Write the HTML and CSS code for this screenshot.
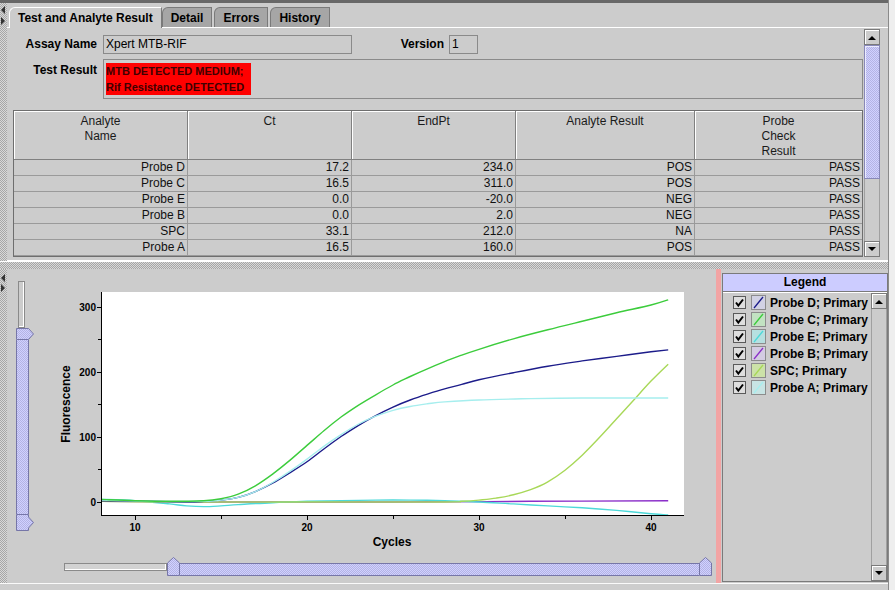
FILE: index.html
```html
<!DOCTYPE html>
<html lang="en">
<head>
<meta charset="utf-8">
<title>Test and Analyte Result</title>
<link rel="stylesheet" href="styles.css">
<script src="script.js" defer></script>
</head>
<body>
<svg class="defs" width="0" height="0" aria-hidden="true">
  <defs>
    <pattern id="bumps" width="2" height="2" patternUnits="userSpaceOnUse">
      <rect width="2" height="2" fill="#d0d0ff"/>
      <rect width="1" height="1" fill="#b4b4e4"/>
      <rect x="1" y="1" width="1" height="1" fill="#b4b4e4"/>
    </pattern>
  </defs>
</svg>
<div class="app">
  <div class="titlebar"></div>

  <div class="top-pane">
    <div class="gutter">
      <svg class="gutter-arrows" width="7" height="24" viewBox="0 0 7 24"><polygon points="5,3 1,7 5,11"/><polygon points="1,14 5,18 1,22"/></svg>
    </div>
    <div class="tabpane">
      <div class="tabs">
        <div class="tab active">Test and Analyte Result</div>
        <div class="tab">Detail</div>
        <div class="tab">Errors</div>
        <div class="tab">History</div>
      </div>
      <div class="tab-content">
        <div class="scroll-view">
          <div class="form-row assay-row">
            <span class="label assay-label">Assay Name</span>
            <span class="field assay-field">Xpert MTB-RIF</span>
            <span class="label version-label">Version</span>
            <span class="field version-field">1</span>
          </div>
          <div class="form-row result-row">
            <span class="label result-label">Test Result</span>
            <div class="result-box"><span class="result-text">MTB DETECTED MEDIUM;<br>Rif Resistance DETECTED</span></div>
          </div>
          <table class="grid">
            <colgroup><col class="c1"><col class="c2"><col class="c3"><col class="c4"><col class="c5"></colgroup>
            <thead>
              <tr><th>Analyte<br>Name</th><th>Ct</th><th>EndPt</th><th>Analyte Result</th><th>Probe<br>Check<br>Result</th></tr>
            </thead>
            <tbody>
              <tr><td>Probe D</td><td>17.2</td><td>234.0</td><td>POS</td><td>PASS</td></tr>
              <tr><td>Probe C</td><td>16.5</td><td>311.0</td><td>POS</td><td>PASS</td></tr>
              <tr><td>Probe E</td><td>0.0</td><td>-20.0</td><td>NEG</td><td>PASS</td></tr>
              <tr><td>Probe B</td><td>0.0</td><td>2.0</td><td>NEG</td><td>PASS</td></tr>
              <tr><td>SPC</td><td>33.1</td><td>212.0</td><td>NA</td><td>PASS</td></tr>
              <tr><td>Probe A</td><td>16.5</td><td>160.0</td><td>POS</td><td>PASS</td></tr>
            </tbody>
          </table>
        </div>
        <div class="vscroll">
          <div class="sbtn"><svg width="8" height="5" viewBox="0 0 8 5"><polygon points="0,5 4,1 8,5"/></svg></div>
          <div class="thumb top-thumb"></div>
          <div class="track"></div>
          <div class="sbtn"><svg width="8" height="5" viewBox="0 0 8 5"><polygon points="0,0 8,0 4,4"/></svg></div>
        </div>
      </div>
    </div>
  </div>

  <div class="hdivider"></div>

  <div class="bottom-pane">
    <div class="gutter">
      <svg class="gutter-arrows" width="7" height="24" viewBox="0 0 7 24"><polygon points="5,5 1,9 5,13"/><polygon points="1,15 5,19 1,23"/></svg>
    </div>
    <div class="chart-area">
      <div class="chart-row">
        <div class="vslider">
          <div class="vtrack"></div>
          <svg class="knob" width="18" height="12" viewBox="0 0 18 12"><polygon points="0.5,0.5 12.5,0.5 17.5,6 12.5,11.5 0.5,11.5" fill="url(#bumps)" stroke="#7676a8"/></svg>
          <div class="vbody"></div>
          <svg class="knob" width="18" height="17" viewBox="0 0 18 17"><polygon points="0.5,0.5 12.5,0.5 12.5,3 17.5,8.5 12.5,14 12.5,16.5 0.5,16.5" fill="url(#bumps)" stroke="#7676a8"/></svg>
        </div>
        <svg class="plot" width="672" height="271" viewBox="0 0 672 271">
          <defs><clipPath id="plotclip"><rect x="61" y="11" width="583" height="224"/></clipPath></defs>
          <rect x="61" y="11" width="583" height="223" fill="#ffffff"/>
          <g clip-path="url(#plotclip)" fill="none" stroke-width="1.4">
            <path data-series="b" stroke="#8b2fc9"/>
            <path data-series="e" stroke="#4dd9d9"/>
            <path data-series="spc" stroke="#a8d858"/>
            <path data-series="d" stroke="#1c1c8a"/>
            <path data-series="a" stroke="#a6eeee"/>
            <path data-series="c" stroke="#3ccc3c"/>
          </g>
          <g stroke="#000" stroke-width="1" fill="none">
            <line x1="61.5" y1="11" x2="61.5" y2="235"/>
            <line x1="61" y1="234.5" x2="644" y2="234.5"/>
            <line x1="57" y1="221.5" x2="61" y2="221.5"/>
            <line x1="58" y1="188.5" x2="61" y2="188.5"/>
            <line x1="57" y1="156.5" x2="61" y2="156.5"/>
            <line x1="58" y1="123.5" x2="61" y2="123.5"/>
            <line x1="57" y1="91.5" x2="61" y2="91.5"/>
            <line x1="58" y1="58.5" x2="61" y2="58.5"/>
            <line x1="57" y1="26.5" x2="61" y2="26.5"/>
            <line x1="95.5" y1="234" x2="95.5" y2="239"/>
            <line x1="181.5" y1="234" x2="181.5" y2="238"/>
            <line x1="267.5" y1="234" x2="267.5" y2="239"/>
            <line x1="353.5" y1="234" x2="353.5" y2="238"/>
            <line x1="439.5" y1="234" x2="439.5" y2="239"/>
            <line x1="525.5" y1="234" x2="525.5" y2="238"/>
            <line x1="611.5" y1="234" x2="611.5" y2="239"/>
          </g>
          <g class="tick-label">
            <text x="56" y="225" text-anchor="end">0</text>
            <text x="56" y="160" text-anchor="end">100</text>
            <text x="56" y="95" text-anchor="end">200</text>
            <text x="56" y="30" text-anchor="end">300</text>
            <text x="95" y="250" text-anchor="middle">10</text>
            <text x="267" y="250" text-anchor="middle">20</text>
            <text x="439" y="250" text-anchor="middle">30</text>
            <text x="611" y="250" text-anchor="middle">40</text>
          </g>
          <text class="axis-title" x="352" y="264.5" text-anchor="middle">Cycles</text>
          <text class="axis-title" transform="translate(29.5,123) rotate(-90)" text-anchor="middle">Fluorescence</text>
        </svg>
      </div>
      <div class="hslider">
        <div class="htrack"></div>
        <svg class="knob" width="13" height="19" viewBox="0 0 13 19"><polygon points="0.5,18.5 0.5,6 6.5,0.5 12.5,6 12.5,18.5" fill="url(#bumps)" stroke="#7676a8"/></svg>
        <div class="hbody"></div>
        <svg class="knob" width="13" height="19" viewBox="0 0 13 19"><polygon points="0.5,18.5 0.5,6 6.5,0.5 12.5,6 12.5,18.5" fill="url(#bumps)" stroke="#7676a8"/></svg>
      </div>
    </div>
    <div class="pink"></div>
    <div class="legend">
      <div class="legend-title">Legend</div>
      <div class="legend-body">
        <ul class="legend-list">
          <li class="legend-item">
            <svg class="check" width="13" height="13" viewBox="0 0 13 13"><rect x="0.5" y="0.5" width="12" height="12" fill="#dedede" stroke="#5a5a5a"/><path d="M3 6.5 L5.3 9.5 L10 3.5" fill="none" stroke="#000" stroke-width="2"/></svg>
            <svg class="swatch" width="15" height="15" viewBox="0 0 15 15"><rect x="0.5" y="0.5" width="14" height="14" fill="#d2d2e4" stroke="#8c8c8c"/><line x1="3" y1="13" x2="12" y2="2" stroke="#1c1c8a" stroke-width="1.3"/></svg>
            <span>Probe D; Primary</span>
          </li>
          <li class="legend-item">
            <svg class="check" width="13" height="13" viewBox="0 0 13 13"><rect x="0.5" y="0.5" width="12" height="12" fill="#dedede" stroke="#5a5a5a"/><path d="M3 6.5 L5.3 9.5 L10 3.5" fill="none" stroke="#000" stroke-width="2"/></svg>
            <svg class="swatch" width="15" height="15" viewBox="0 0 15 15"><rect x="0.5" y="0.5" width="14" height="14" fill="#c2e2c2" stroke="#8c8c8c"/><line x1="3" y1="13" x2="12" y2="2" stroke="#3ccc3c" stroke-width="1.3"/></svg>
            <span>Probe C; Primary</span>
          </li>
          <li class="legend-item">
            <svg class="check" width="13" height="13" viewBox="0 0 13 13"><rect x="0.5" y="0.5" width="12" height="12" fill="#dedede" stroke="#5a5a5a"/><path d="M3 6.5 L5.3 9.5 L10 3.5" fill="none" stroke="#000" stroke-width="2"/></svg>
            <svg class="swatch" width="15" height="15" viewBox="0 0 15 15"><rect x="0.5" y="0.5" width="14" height="14" fill="#b6e0e0" stroke="#8c8c8c"/><line x1="3" y1="13" x2="12" y2="2" stroke="#4dd9d9" stroke-width="1.3"/></svg>
            <span>Probe E; Primary</span>
          </li>
          <li class="legend-item">
            <svg class="check" width="13" height="13" viewBox="0 0 13 13"><rect x="0.5" y="0.5" width="12" height="12" fill="#dedede" stroke="#5a5a5a"/><path d="M3 6.5 L5.3 9.5 L10 3.5" fill="none" stroke="#000" stroke-width="2"/></svg>
            <svg class="swatch" width="15" height="15" viewBox="0 0 15 15"><rect x="0.5" y="0.5" width="14" height="14" fill="#d4cce2" stroke="#8c8c8c"/><line x1="3" y1="13" x2="12" y2="2" stroke="#8b2fc9" stroke-width="1.3"/></svg>
            <span>Probe B; Primary</span>
          </li>
          <li class="legend-item">
            <svg class="check" width="13" height="13" viewBox="0 0 13 13"><rect x="0.5" y="0.5" width="12" height="12" fill="#dedede" stroke="#5a5a5a"/><path d="M3 6.5 L5.3 9.5 L10 3.5" fill="none" stroke="#000" stroke-width="2"/></svg>
            <svg class="swatch" width="15" height="15" viewBox="0 0 15 15"><rect x="0.5" y="0.5" width="14" height="14" fill="#cce2a8" stroke="#8c8c8c"/><line x1="3" y1="13" x2="12" y2="2" stroke="#a8d858" stroke-width="1.3"/></svg>
            <span>SPC; Primary</span>
          </li>
          <li class="legend-item">
            <svg class="check" width="13" height="13" viewBox="0 0 13 13"><rect x="0.5" y="0.5" width="12" height="12" fill="#dedede" stroke="#5a5a5a"/><path d="M3 6.5 L5.3 9.5 L10 3.5" fill="none" stroke="#000" stroke-width="2"/></svg>
            <svg class="swatch" width="15" height="15" viewBox="0 0 15 15"><rect x="0.5" y="0.5" width="14" height="14" fill="#c8e4e4" stroke="#8c8c8c"/><line x1="3" y1="13" x2="12" y2="2" stroke="#a6eeee" stroke-width="1.3"/></svg>
            <span>Probe A; Primary</span>
          </li>
        </ul>
        <div class="lscroll">
          <div class="sbtn"><svg width="8" height="5" viewBox="0 0 8 5"><polygon points="0,5 4,1 8,5"/></svg></div>
          <div class="track"></div>
          <div class="sbtn"><svg width="8" height="5" viewBox="0 0 8 5"><polygon points="0,0 8,0 4,4"/></svg></div>
        </div>
      </div>
    </div>
  </div>

  <div class="footer"></div>
</div>
<div class="right-strip"></div>
</body>
</html>
```

FILE: styles.css
```css
* { box-sizing: border-box; }
html, body { margin: 0; padding: 0; }
body {
  width: 895px;
  height: 590px;
  overflow: hidden;
  display: flex;
  background: #cccccc;
  font-family: "Liberation Sans", Arial, sans-serif;
  font-size: 12px;
  color: #000;
}
.defs { display: block; width: 0; height: 0; flex: none; }

.app { width: 888px; flex: none; display: flex; flex-direction: column; }
.right-strip { width: 7px; flex: none; background: #eeeeee; border-left: 1px solid #8a8a8a; }

.titlebar { height: 3px; flex: none; background: #686868; }

.gutter {
  width: 7px;
  flex: none;
  background: repeating-conic-gradient(#a6a6a6 0 25%, #d8d8d8 0 50%) 0 0 / 2px 2px;
}
.gutter-arrows { display: block; fill: #333333; }

/* ---------- top pane ---------- */
.top-pane { height: 258px; flex: none; display: flex; }
.tabpane { flex: 1; min-width: 0; display: flex; flex-direction: column; }
.tabs { height: 24px; flex: none; display: flex; align-items: flex-end; padding-left: 2px; }
.tab {
  height: 20px;
  padding: 1px 8px 0;
  line-height: 18px;
  font-weight: bold;
  white-space: nowrap;
  background: #a6a6a6;
  border: 1px solid #7a7a7a;
  border-bottom: 0;
  border-radius: 6px 0 0 0;
  margin-right: 2px;
}
.tab.active {
  background: #cccccc;
  border-color: #ffffff #7a7a7a #cccccc #ffffff;
  height: 21px;
  margin-bottom: -1px;
  margin-right: 0;
  position: relative;
}
.tab-content {
  flex: 1;
  display: flex;
  border-top: 1px solid #ffffff;
  border-bottom: 1px solid #ffffff;
  padding: 1px 8px 2px 2px;
}
.scroll-view { flex: 1; min-width: 0; padding-left: 4px; }

.form-row { display: flex; }
.label { font-weight: bold; text-align: right; white-space: nowrap; }
.assay-row { margin-top: 5px; height: 20px; align-items: center; }
.assay-label { width: 84px; margin-right: 6px; }
.field {
  height: 19px;
  border: 1px solid #8a8a8a;
  line-height: 17px;
  padding-left: 2px;
  background: #cccccc;
  white-space: nowrap;
}
.assay-field { width: 249px; }
.version-label { width: 46px; margin-left: 46px; margin-right: 5px; }
.version-field { width: 29px; }

.result-row { margin-top: 5px; height: 40px; align-items: flex-start; }
.result-label { width: 84px; margin-right: 6px; padding-top: 4px; line-height: 15px; }
.result-box { width: 760px; height: 40px; border: 1px solid #8a8a8a; padding: 3px 2px; }
.result-text {
  display: inline-block;
  width: 145px;
  background: #ff0000;
  color: #400000;
  font-weight: bold;
  font-size: 11px;
  line-height: 16px;
  white-space: nowrap;
}

.grid {
  width: 850px;
  margin-top: 11px;
  table-layout: fixed;
  border-collapse: separate;
  border-spacing: 0;
  border: 1px solid #6e6e6e;
}
.c1 { width: 174px; }
.c2 { width: 164px; }
.c3 { width: 164px; }
.c4 { width: 179px; }
.c5 { width: 167px; }
.grid th {
  font-weight: normal;
  color: #1a1a1a;
  vertical-align: top;
  text-align: center;
  padding: 3px 0 0;
  line-height: 15px;
  border-right: 1px solid #808080;
  border-bottom: 1px solid #808080;
  box-shadow: inset 1px 1px 0 #ffffff;
}
.grid td {
  padding: 0 2px 0 0;
  line-height: 15px;
  text-align: right;
  white-space: nowrap;
  color: #111;
  border-right: 1px solid #9a9a9a;
  border-bottom: 1px solid #9a9a9a;
}
.grid th:last-child, .grid td:last-child { border-right: 0; }

.vscroll { width: 16px; height: 228px; flex: none; display: flex; flex-direction: column; }
.sbtn {
  height: 16px;
  flex: none;
  display: flex;
  align-items: center;
  justify-content: center;
  background: #cccccc;
  border: 1px solid #7a7a7a;
  box-shadow: inset 1px 1px 0 #ffffff;
}
.sbtn svg { display: block; fill: #000; }
.thumb {
  border: 1px solid #8888b8;
  box-shadow: inset 1px 1px 0 #ececff;
  background: repeating-conic-gradient(#b4b4e4 0 25%, #d0d0ff 0 50%) 0 0 / 2px 2px;
}
.top-thumb { height: 134px; flex: none; }
.track { flex: 1; background: #cccccc; border-left: 1px solid #a0a0a0; border-right: 1px solid #a0a0a0; }

/* ---------- divider ---------- */
.hdivider {
  height: 8px;
  flex: none;
  border-top: 1px solid #ffffff;
  background: repeating-conic-gradient(#a6a6a6 0 25%, #d8d8d8 0 50%) 0 0 / 2px 2px;
}

/* ---------- bottom pane ---------- */
.bottom-pane { height: 314px; flex: none; display: flex; }
.chart-area { width: 709px; flex: none; display: flex; flex-direction: column; padding-top: 12px; }
.chart-row { height: 271px; flex: none; display: flex; }

.vslider { width: 18px; margin-left: 9px; flex: none; display: flex; flex-direction: column; align-items: flex-start; }
.vtrack {
  width: 7px;
  height: 47px;
  margin-left: 2px;
  background: #cccccc;
  border: 1px solid #8a8a8a;
  box-shadow: inset -1px -1px 0 #ffffff;
}
.knob { display: block; flex: none; }
.vbody {
  width: 13px;
  height: 174px;
  background: repeating-conic-gradient(#b4b4e4 0 25%, #d0d0ff 0 50%) 0 0 / 2px 2px;
  border-left: 1px solid #7676a8;
  border-right: 1px solid #7676a8;
}

.plot { display: block; flex: none; margin-left: 6px; }
.tick-label text { font-family: "Liberation Sans", Arial, sans-serif; font-weight: bold; font-size: 10px; fill: #000; }
.axis-title { font-family: "Liberation Sans", Arial, sans-serif; font-weight: bold; font-size: 12px; fill: #000; }

.hslider { width: 648px; height: 19px; margin-top: 5px; margin-left: 57px; flex: none; display: flex; align-items: flex-end; }
.htrack {
  width: 103px;
  height: 8px;
  margin-bottom: 5px;
  background: #d2d2d2;
  border: 1px solid #8a8a8a;
  box-shadow: inset -1px -1px 0 #ffffff;
}
.hbody {
  flex: 1;
  height: 13px;
  background: repeating-conic-gradient(#b4b4e4 0 25%, #d0d0ff 0 50%) 0 0 / 2px 2px;
  border-top: 1px solid #7676a8;
  border-bottom: 1px solid #7676a8;
}

.pink { width: 5px; flex: none; background: #f2a4a4; }

.legend {
  width: 166px;
  flex: none;
  margin: 4px 0 1px 1px;
  border: 1px solid #7a7a7a;
  display: flex;
  flex-direction: column;
}
.legend-title {
  height: 18px;
  flex: none;
  background: #ccccff;
  border-bottom: 1px solid #7a7a7a;
  text-align: center;
  font-weight: bold;
  line-height: 17px;
}
.legend-body { flex: 1; display: flex; border-top: 1px solid #ffffff; }
.legend-list { flex: 1; list-style: none; margin: 0; padding: 1px 0 0 10px; }
.legend-item { height: 17px; display: flex; align-items: center; font-weight: bold; white-space: nowrap; }
.check { display: block; margin-right: 5px; flex: none; }
.swatch { display: block; margin-right: 4px; flex: none; }
.lscroll { width: 16px; flex: none; display: flex; flex-direction: column; }

.footer { height: 7px; flex: none; border-top: 1px solid #fafafa; background: #cdcdcd; }
```

FILE: script.js
```js
(function () {
  function X(c) { return 95 + (c - 10) * 17.2; }
  function Y(v) { return 221 - v * 0.65; }

  var data = {
    d: [[8,2],[11,1],[13,0],[14,1],[15,3],[16,7],[17,16],[18,29],[19,45],[20,62],[21,82],[22,101],[23,118],[24,133],[25,146],[26,157],[27,166],[28,174],[29,181],[30,188],[32,199],[34,209],[36,217],[38,224],[40,231],[41,234]],
    c: [[8,4],[10,2],[12,1],[14,2],[15,5],[16,12],[17,25],[18,43],[19,64],[20,87],[21,110],[22,131],[23,149],[24,165],[25,180],[26,193],[27,205],[28,216],[29,226],[30,235],[32,251],[34,265],[36,278],[38,291],[40,303],[41,311]],
    a: [[8,3],[11,1],[14,1],[15,3],[16,7],[17,16],[18,30],[19,47],[20,66],[21,86],[22,104],[23,120],[24,132],[25,141],[26,147],[27,151],[28,154],[30,157],[33,159],[36,160],[41,160]],
    spc: [[8,1],[12,0],[20,0],[28,0],[29,1],[30,3],[31,6],[32,11],[33,19],[34,31],[35,49],[36,72],[37,99],[38,128],[39,157],[40,186],[41,212]],
    e: [[8,4],[10,2],[12,-3],[13,-6],[14,-7],[15,-6],[16,-4],[18,-1],[20,1],[22,2],[24,3],[26,3],[28,2],[30,0],[32,-3],[34,-6],[36,-9],[38,-13],[40,-18],[41,-20]],
    b: [[8,1],[15,0],[25,0],[33,1],[41,2]]
  };

  function f(n) { return n.toFixed(1); }

  function toPath(pts) {
    var p = pts.map(function (q) { return [X(q[0]), Y(q[1])]; });
    var d = 'M' + f(p[0][0]) + ',' + f(p[0][1]);
    for (var i = 0; i < p.length - 1; i++) {
      var p0 = p[i - 1] || p[i], p1 = p[i], p2 = p[i + 1], p3 = p[i + 2] || p2;
      var c1x = p1[0] + (p2[0] - p0[0]) / 6, c1y = p1[1] + (p2[1] - p0[1]) / 6;
      var c2x = p2[0] - (p3[0] - p1[0]) / 6, c2y = p2[1] - (p3[1] - p1[1]) / 6;
      d += ' C' + f(c1x) + ',' + f(c1y) + ' ' + f(c2x) + ',' + f(c2y) + ' ' + f(p2[0]) + ',' + f(p2[1]);
    }
    return d;
  }

  var paths = document.querySelectorAll('path[data-series]');
  for (var i = 0; i < paths.length; i++) {
    var key = paths[i].getAttribute('data-series');
    if (data[key]) paths[i].setAttribute('d', toPath(data[key]));
  }
})();
```
